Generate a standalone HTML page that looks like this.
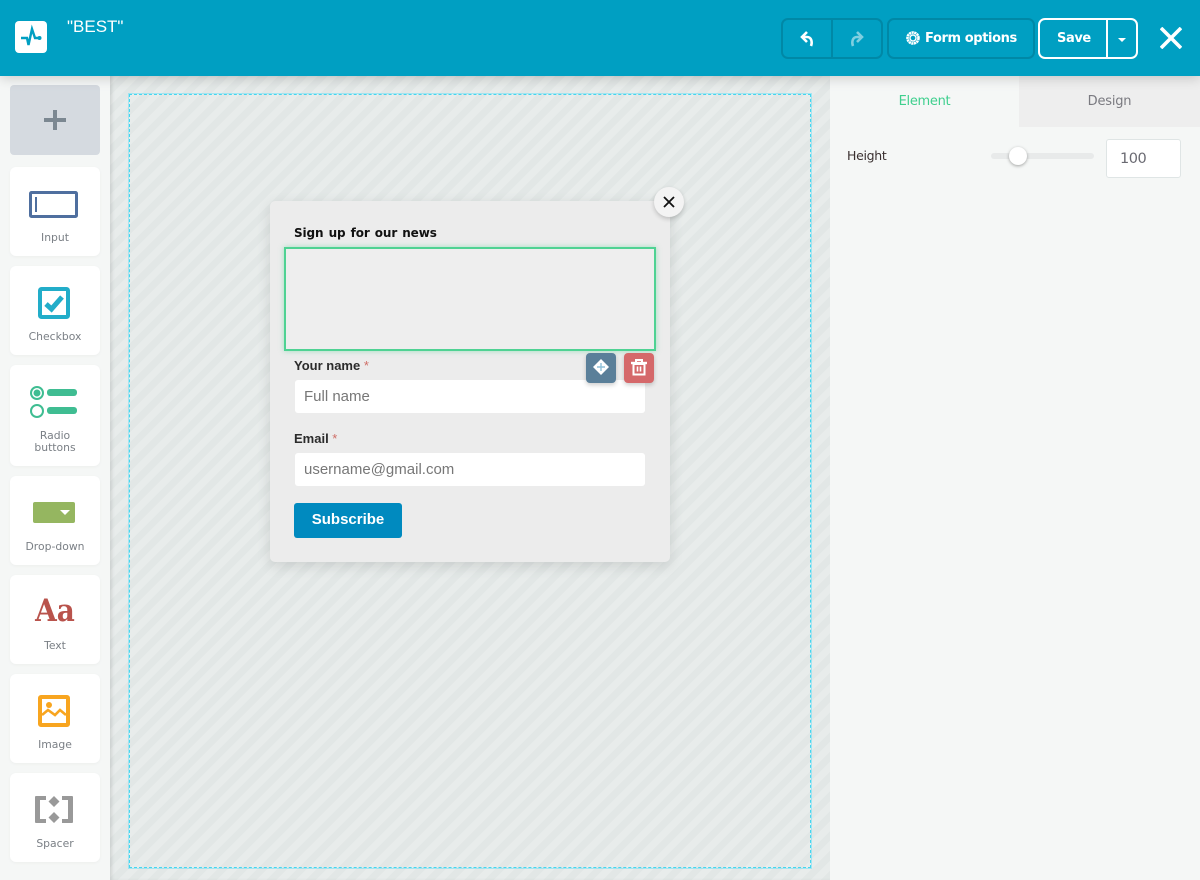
<!DOCTYPE html>
<html><head><meta charset="utf-8"><style>
*{box-sizing:border-box}
html,body{margin:0;padding:0;width:1200px;height:880px;overflow:hidden;background:#f5f7f6;font-family:"Liberation Sans",sans-serif}
.a{position:absolute}
#hd{left:0;top:0;width:1200px;height:76px;background:#009fc2;box-shadow:0 2px 12px rgba(0,0,0,.18);z-index:5}
#canvas{left:110px;top:76px;width:720px;height:804px;background:repeating-linear-gradient(135deg,#e8eceb 0 7px,#e2e7e6 7px 14px);box-shadow:inset 3px 0 3px -1px rgba(0,0,0,.1)}
#dash{left:129px;top:94px;width:682px;height:774px;border:1px dashed #45d6ef;box-shadow:0 0 0 1px rgba(120,225,245,.6)}
.card{left:10px;width:90px;background:#fff;border-radius:6px;box-shadow:0 1px 3px rgba(0,0,0,.04);text-align:center}
.lb{position:absolute;left:0;width:90px;line-height:12px;color:#7a7f85;text-align:center;font-family:"DejaVu Sans",sans-serif;font-size:10.8px}
.btn{border:2px solid #0088a6;height:41px;top:18px;border-radius:7px;color:#fff;font-weight:bold;font-family:"DejaVu Sans",sans-serif}
</style></head><body>
<div class="a" id="canvas"></div>
<div class="a" id="dash"></div>

<div class="a" id="hd">
 <div class="a" style="left:15px;top:21px;width:32px;height:32px;background:#fff;border-radius:4px"></div>
 <svg class="a" style="left:15px;top:21px" width="32" height="32" fill="none" stroke="#009fc2" stroke-width="2.4"><path d="M6 17h6l1.5 7L17 8l3 9h4"/><circle cx="24.5" cy="17" r="2" fill="#009fc2" stroke="none"/></svg>
 <div class="a" style="left:67px;top:18px;color:#fff;font:17px/18px 'Liberation Sans',sans-serif">"BEST"</div>
 <div class="a btn" style="left:781px;width:52px;border-radius:7px 0 0 7px"></div>
 <div class="a btn" style="left:831px;width:52px;border-radius:0 7px 7px 0"></div>
 <svg class="a" style="left:798px;top:29px" width="20" height="20" fill="none" stroke="#fff" stroke-width="2.6"><path d="M13 17c1.500-4 .5-9-4-9H4"/><path d="M9 3L4 8l5 5"/></svg>
 <svg class="a" style="left:848px;top:29px" width="20" height="20" fill="none" stroke="#7fcfe0" stroke-width="2.6"><path d="M5 17C3.500 13 4.500 8 9 8h5"/><path d="M9 3l5 5-5 5"/></svg>
 <div class="a btn" style="left:887px;width:148px"></div>
 <svg class="a" style="left:905px;top:30px" width="16" height="16" fill="none" stroke="#fff"><circle cx="8" cy="8" r="5.500" stroke-width="2.600" stroke-dasharray="2.200 .5"/><circle cx="8" cy="8" r="3" stroke-width="1.400"/></svg>
 <div class="a" style="left:925px;top:30px;color:#fff;font:bold 13px/18px 'DejaVu Sans',sans-serif;letter-spacing:-.4px">Form options</div>
 <div class="a" style="left:1038px;top:18px;width:100px;height:41px;border:2px solid #fff;border-radius:7px"></div>
 <div class="a" style="left:1106px;top:19px;width:2px;height:39px;background:#fff"></div>
 <div class="a" style="left:1057px;top:30px;color:#fff;font:bold 13px/18px 'DejaVu Sans',sans-serif;letter-spacing:-.4px">Save</div>
 <div class="a" style="left:1118px;top:38px;border:4px solid transparent;border-top-color:#fff;border-bottom:0"></div>
 <svg class="a" style="left:1160px;top:27px" width="22" height="22" stroke="#fff" stroke-width="3.6"><path d="M1 1l20 20M21 1L1 21"/></svg>
</div>

<div class="a" style="left:10px;top:85px;width:90px;height:70px;background:#d5dae0;border-radius:4px"></div>
<div class="a" style="left:44px;top:118px;width:22px;height:4px;background:#7b8791"></div>
<div class="a" style="left:53px;top:110px;width:4px;height:20px;background:#7b8791"></div>

<div class="a card" style="top:167px;height:89px"><div class="lb" style="top:65px">Input</div>
 <svg class="a" style="left:19px;top:24px" width="50" height="27" fill="none"><rect x="1.500" y="1.500" width="46" height="24" rx="1" stroke="#4f6f9f" stroke-width="3"/><rect x="6" y="6" width="2" height="15" fill="#4f6f9f"/></svg></div>
<div class="a card" style="top:266px;height:89px"><div class="lb" style="top:65px">Checkbox</div>
 <svg class="a" style="left:28px;top:21px" width="32" height="32" fill="none"><rect x="2" y="2" width="28" height="28" rx="1.500" stroke="#22adc9" stroke-width="4"/><path d="M8 17l5.500 5L24 10" stroke="#22adc9" stroke-width="5"/></svg></div>
<div class="a card" style="top:365px;height:101px"><div class="lb" style="top:65px">Radio<br>buttons</div>
 <svg class="a" style="left:19px;top:20px" width="50" height="34"><g fill="none" stroke="#3fbd92" stroke-width="2"><circle cx="8" cy="8" r="6"/><circle cx="8" cy="26" r="6"/></g><circle cx="8" cy="8" r="3.500" fill="#3fbd92"/><rect x="18" y="4" width="30" height="7" rx="3" fill="#3fbd92"/><rect x="18" y="22" width="30" height="7" rx="3" fill="#3fbd92"/></svg></div>
<div class="a card" style="top:476px;height:89px"><div class="lb" style="top:65px">Drop-down</div>
 <div class="a" style="left:23px;top:26px;width:42px;height:21px;background:#95b660;border-radius:2px"></div>
 <div class="a" style="left:50px;top:34px;border:5px solid transparent;border-top-color:#fff;border-bottom:0"></div></div>
<div class="a card" style="top:575px;height:89px"><div class="lb" style="top:65px">Text</div>
 <div class="a" style="left:0;top:18px;width:90px;font:bold 31px/36px 'DejaVu Serif',serif;color:#b9534c;transform:scaleX(.9);white-space:nowrap">Aa</div></div>
<div class="a card" style="top:674px;height:89px"><div class="lb" style="top:65px">Image</div>
 <svg class="a" style="left:28px;top:21px" width="32" height="32"><rect x="2" y="2" width="28" height="28" rx="1" fill="#fff" stroke="#f8a51f" stroke-width="4"/><circle cx="11" cy="10" r="3" fill="#f8a51f"/><path d="M4 20l6-5 7 5 5-5 6 5" fill="none" stroke="#f8a51f" stroke-width="2.600"/></svg></div>
<div class="a card" style="top:773px;height:89px"><div class="lb" style="top:65px">Spacer</div>
 <svg class="a" style="left:24px;top:22px" width="40" height="29" fill="#999"><path d="M12 1H2a1 1 0 0 0-1 1v25a1 1 0 0 0 1 1h10v-4H6V5h6zM28 1h10a1 1 0 0 1 1 1v25a1 1 0 0 1-1 1H28v-4h6V5h-6z"/><path d="M20 1l5.500 5.500-5.500 5.500-5.500-5.500zM20 17l5.500 5.500-5.500 5.500-5.500-5.500z"/></svg></div>

<div class="a" style="left:270px;top:201px;width:400px;height:361px;background:#ececec;border-radius:5px;box-shadow:0 4px 14px rgba(0,0,0,.12)"></div>
<div class="a" style="left:654px;top:187px;width:30px;height:30px;background:#f3f3f3;border-radius:50%;box-shadow:0 2px 5px rgba(0,0,0,.2)"></div>
<svg class="a" style="left:663px;top:196px" width="12" height="12" stroke="#111" stroke-width="1.800"><path d="M1 1l10 10M11 1L1 11"/></svg>
<div class="a" style="left:294px;top:224px;font:bold 12px/18px 'DejaVu Sans',sans-serif;color:#111;letter-spacing:-.1px;word-spacing:1px;white-space:nowrap">Sign up for our news</div>
<div class="a" style="left:284px;top:247px;width:372px;height:104px;background:#eee;border:2px solid #4fd293;box-shadow:0 0 5px rgba(79,210,147,.5)"></div>
<div class="a" style="left:294px;top:357px;font:bold 13px/18px 'Liberation Sans',sans-serif;color:#2b2b2b">Your name <span style="color:#cf6d66;font-weight:normal">*</span></div>
<div class="a" style="left:295px;top:380px;width:350px;height:33px;background:#fff;border-radius:3px;font-size:15px;line-height:33px;color:#777;padding-left:9px">Full name</div>
<div class="a" style="left:294px;top:430px;font:bold 13px/18px 'Liberation Sans',sans-serif;color:#2b2b2b">Email <span style="color:#cf6d66;font-weight:normal">*</span></div>
<div class="a" style="left:295px;top:453px;width:350px;height:33px;background:#fff;border-radius:3px;font-size:15px;line-height:33px;color:#777;padding-left:9px">username@gmail.com</div>
<div class="a" style="left:294px;top:503px;width:108px;height:35px;background:#008abf;border-radius:3px;color:#fff;font:bold 15px/34px 'Liberation Sans',sans-serif;text-align:center">Subscribe</div>
<div class="a" style="left:586px;top:353px;width:30px;height:30px;background:#5a7f99;border-radius:4px;box-shadow:0 2px 5px rgba(0,0,0,.2)"></div>
<svg class="a" style="left:593px;top:359px" width="16" height="16"><path d="M8 0l8 8-8 8-8-8z" fill="#fff"/><path d="M8 4v8M4 8h8" stroke="#8fc0d8" stroke-width="1.400"/></svg>
<div class="a" style="left:624px;top:353px;width:30px;height:30px;background:#d5686a;border-radius:4px;box-shadow:0 2px 5px rgba(0,0,0,.2)"></div>
<svg class="a" style="left:631px;top:359px" width="16" height="17" fill="none" stroke="#fff" stroke-width="2"><path d="M0 4h16" stroke-width="2.400"/><path d="M5 3V1h6v2"/><rect x="2.500" y="5" width="11" height="10.500"/><path d="M6.500 7.500v5M9.500 7.500v5" stroke-width="1.600"/></svg>

<div class="a" style="left:1019px;top:76px;width:181px;height:51px;background:#eeeeee"></div>
<div class="a" style="left:830px;top:93px;width:189px;text-align:center;font:13px/17px 'DejaVu Sans',sans-serif;letter-spacing:-.3px;color:#3fcf8e">Element</div>
<div class="a" style="left:1019px;top:93px;width:181px;text-align:center;font:13px/17px 'DejaVu Sans',sans-serif;letter-spacing:-.2px;color:#7a7a80">Design</div>
<div class="a" style="left:847px;top:147px;font:12.500px/17px 'DejaVu Sans',sans-serif;letter-spacing:-.3px;color:#3a3030">Height</div>
<div class="a" style="left:991px;top:153px;width:103px;height:6px;background:#e8eaea;border-radius:3px"></div>
<div class="a" style="left:1009px;top:147px;width:18px;height:18px;background:#fff;border-radius:50%;box-shadow:0 1px 3px rgba(0,0,0,.35)"></div>
<div class="a" style="left:1106px;top:139px;width:75px;height:39px;background:#fff;border:1px solid #dfe5e5;border-radius:3px;font:14.500px/38px 'DejaVu Sans',sans-serif;letter-spacing:-.5px;color:#6a6a72;padding-left:13px">100</div>
</body></html>
